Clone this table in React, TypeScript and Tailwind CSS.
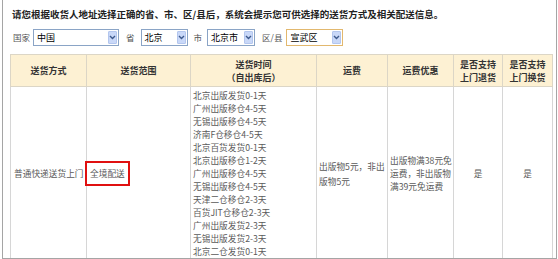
import React from 'react';

const FONT = { fontFamily: '"Noto Sans CJK SC", "Liberation Sans", sans-serif' };

const Chevron: React.FC = () => (
  <svg width="7" height="5" viewBox="0 0 7 5">
    <path d="M1 1 L3.5 3.5 L6 1" fill="none" stroke="#3d5a8c" strokeWidth="1.4" />
  </svg>
);

const FakeSelect: React.FC<{ value: string; width: string; focused?: boolean }> = ({ value, width, focused }) => (
  <div
    className={`${width} h-[17px] shrink-0 flex items-center justify-between bg-white border ${
      focused ? 'border-[#e2b86e]' : 'border-[#8aa4c6]'
    }`}
  >
    <span className="pl-[3px] text-[9px] leading-none text-black">{value}</span>
    <span className="w-[9px] h-[13px] mr-[1px] flex items-center justify-center bg-[#c9d8f8] border border-[#b3c6ee] rounded-[1px]">
      <Chevron />
    </span>
  </div>
);

const times = [
  '北京出版发货0-1天',
  '广州出版移仓4-5天',
  '无锡出版移仓4-5天',
  '济南F仓移仓4-5天',
  '北京百货发货0-1天',
  '北京出版移仓1-2天',
  '广州出版移仓4-5天',
  '无锡出版移仓4-5天',
  '天津二仓移仓2-3天',
  '百货JIT仓移仓2-3天',
  '广州出版发货2-3天',
  '无锡出版发货2-3天',
  '北京二仓发货0-1天',
];

export default function App() {
  return (
    <div className="w-[558px] h-[259px] overflow-hidden bg-white" style={FONT}>
      <div className="ml-[2px] w-[555px] h-[259px] border-l border-r border-b border-[#a5a5a5] overflow-hidden">
        {/* title */}
        <div className="h-[28px] pl-[9px] flex items-center text-[9.5px] font-bold text-[#222] whitespace-nowrap">
          请您根据收货人地址选择正确的省、市、区/县后，系统会提示您可供选择的送货方式及相关配送信息。
        </div>

        {/* filters */}
        <div className="mt-[1px] h-[17px] pl-[10px] flex items-center text-[8.5px] text-[#555] whitespace-nowrap">
          <span>国家</span>
          <div className="ml-[3px]">
            <FakeSelect value="中国" width="w-[86px]" />
          </div>
          <span className="ml-[7px]">省</span>
          <div className="ml-[6px]">
            <FakeSelect value="北京" width="w-[47px]" />
          </div>
          <span className="ml-[6px]">市</span>
          <div className="ml-[5px]">
            <FakeSelect value="北京市" width="w-[48px]" />
          </div>
          <span className="ml-[7px]">区/县</span>
          <div className="ml-[4px]">
            <FakeSelect value="宣武区" width="w-[57px]" focused />
          </div>
        </div>

        {/* table */}
        <table className="mt-[8px] ml-[7px] w-[542px] table-fixed border-collapse text-[8.7px]">
          <colgroup>
            <col className="w-[76px]" />
            <col className="w-[104px]" />
            <col className="w-[126px]" />
            <col className="w-[71px]" />
            <col className="w-[66px]" />
            <col className="w-[49px]" />
            <col className="w-[50px]" />
          </colgroup>
          <thead>
            <tr className="h-[32px] bg-[#fdf1d3] text-[#333] font-bold text-[9px] leading-[13px]">
              <th className="border border-[#dcd6c6] text-center">送货方式</th>
              <th className="border border-[#dcd6c6] text-center">送货范围</th>
              <th className="border border-[#dcd6c6] text-center">
                送货时间
                <br />
                （自出库后）
              </th>
              <th className="border border-[#dcd6c6] text-center">运费</th>
              <th className="border border-[#dcd6c6] text-center">运费优惠</th>
              <th className="border border-[#dcd6c6] text-center">
                是否支持
                <br />
                上门退货
              </th>
              <th className="border border-[#dcd6c6] text-center">
                是否支持
                <br />
                上门换货
              </th>
            </tr>
          </thead>
          <tbody className="text-[#5a5a5a] leading-[13px]">
            <tr>
              <td className="border border-[#d6d6d6] pl-[3px] align-middle whitespace-nowrap overflow-visible">
                普通快递送货上门
              </td>
              <td className="border border-[#d6d6d6] pl-[3px] align-middle">
                <span className="relative inline-block">
                  全境配送
                  <span className="absolute -left-[5px] -right-[5px] -top-[6px] -bottom-[6px] border-2 border-[#e01010]" />
                </span>
              </td>
              <td className="border border-[#d6d6d6] pl-[2px] pt-[2px] pb-[2px] align-top whitespace-nowrap">
                {times.map((t, i) => (
                  <div key={i}>{t}</div>
                ))}
              </td>
              <td className="border border-[#d6d6d6] px-[2px] align-middle leading-[15px] whitespace-nowrap">
                出版物5元，非出
                <br />
                版物5元
              </td>
              <td className="border border-[#d6d6d6] px-[2px] align-middle whitespace-nowrap">
                出版物满38元免
                <br />
                运费，非出版物
                <br />
                满39元免运费
              </td>
              <td className="border border-[#d6d6d6] text-center align-middle">是</td>
              <td className="border border-[#d6d6d6] text-center align-middle">是</td>
            </tr>
          </tbody>
        </table>
      </div>
    </div>
  );
}
